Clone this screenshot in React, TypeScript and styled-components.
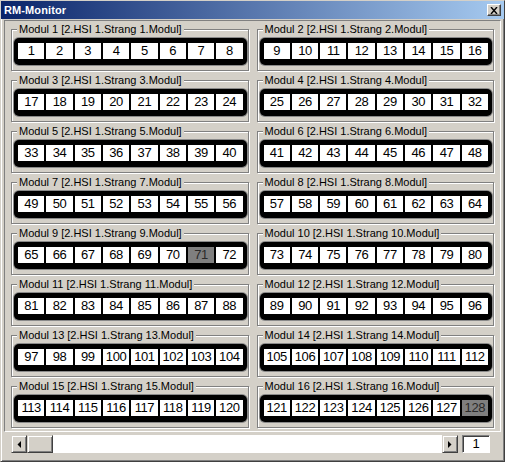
import React from "react";
import styled, { createGlobalStyle } from "styled-components";

const GlobalStyle = createGlobalStyle`
  html, body {
    margin: 0;
    padding: 0;
    background: #d4d0c8;
  }
  * {
    box-sizing: border-box;
  }
`;

const Window = styled.div`
  width: 505px;
  height: 462px;
  background: #d4d0c8;
  border: 1px solid;
  border-color: #d4d0c8 #404040 #404040 #d4d0c8;
  box-shadow: inset 1px 1px 0 #fff, inset -1px -1px 0 #808080;
  display: flex;
  flex-direction: column;
  font-family: "Liberation Sans", Arial, sans-serif;
  overflow: hidden;
`;

const TitleBar = styled.div`
  height: 18px;
  display: flex;
  align-items: center;
  justify-content: space-between;
  padding: 0 3px 0 3px;
  background: linear-gradient(to right, #0a246a, #a6caf0);
`;

const Title = styled.span`
  color: #fff;
  font-weight: bold;
  font-size: 11px;
  letter-spacing: 0.1px;
`;

const CloseButton = styled.div`
  width: 14px;
  height: 12px;
  background: #d4d0c8;
  border: 1px solid;
  border-color: #fff #404040 #404040 #fff;
  box-shadow: inset -1px -1px 0 #808080;
  display: flex;
  align-items: center;
  justify-content: center;
`;

const Body = styled.div`
  flex: 1;
  display: flex;
  flex-direction: column;
  padding: 1px 3px 3px 3px;
`;

const ModulePanel = styled.div`
  height: 412px;
  border: 1px solid;
  border-color: #808080 #fff #fff #808080;
  padding: 0 2px;
  display: grid;
  grid-template-columns: 1fr 1fr;
  grid-template-rows: repeat(8, 51px);
`;

const GroupBox = styled.fieldset`
  margin: 2px 4px 1px 4px;
  padding: 0 1px 5px 2px;
  border: 1px solid #808080;
  box-shadow: 1px 1px 0 #fff, inset 1px 1px 0 #fff;
  min-width: 0;
`;

const Legend = styled.legend`
  margin-left: 3px;
  padding: 0 2px;
  font-size: 11px;
  line-height: 13px;
  color: #000;
  background: #d4d0c8;
  white-space: nowrap;
`;

const Strip = styled.div`
  margin-top: 2px;
  height: 27px;
  background: #000;
  border-radius: 5px;
  padding: 5px 4px 6px 4px;
  box-shadow: 0 0 0 1px #8a8a8a;
  display: flex;
  gap: 2px;
`;

const Channel = styled.div<{ $active?: boolean }>`
  flex: 1;
  height: 16px;
  background: ${(p) => (p.$active ? "#7f7f7f" : "#fff")};
  color: ${(p) => (p.$active ? "#2a2a2a" : "#000")};
  font-size: 13px;
  line-height: 16px;
  letter-spacing: -0.4px;
  text-align: center;
`;

const BottomBar = styled.div`
  flex: 1;
  display: flex;
  align-items: flex-start;
  padding: 3px 11px 0 7px;
  gap: 4px;
`;

const ScrollBar = styled.div`
  flex: 1;
  height: 18px;
  display: flex;
  background: #fff;
`;

const RaisedButton = styled.div<{ $width: number }>`
  width: ${(p) => p.$width}px;
  height: 18px;
  background: #d4d0c8;
  border: 1px solid;
  border-color: #d4d0c8 #404040 #404040 #d4d0c8;
  box-shadow: inset 1px 1px 0 #fff, inset -1px -1px 0 #808080;
  display: flex;
  align-items: center;
  justify-content: center;
`;

const Track = styled.div`
  flex: 1;
  background: #fff;
`;

const PageBox = styled.div`
  width: 28px;
  height: 18px;
  background: #fff;
  border: 1px solid;
  border-color: #808080 #fff #fff #808080;
  box-shadow: inset 1px 1px 0 #404040;
  font-size: 13px;
  line-height: 16px;
  text-align: center;
  color: #000;
`;

const Arrow = ({ dir }: { dir: "left" | "right" }) => (
  <svg width="4" height="7" viewBox="0 0 4 7">
    {dir === "left" ? (
      <polygon points="4,0 4,7 0.5,3.5" fill="#000" />
    ) : (
      <polygon points="0,0 0,7 3.5,3.5" fill="#000" />
    )}
  </svg>
);

const activeChannels = [71, 128];

const modules = Array.from({ length: 16 }, (_, i) => i + 1);

const App = () => {
  return (
    <>
      <GlobalStyle />
      <Window>
        <TitleBar>
          <Title>RM-Monitor</Title>
          <CloseButton>
            <svg width="8" height="7" viewBox="0 0 8 7">
              <path d="M1 0 L7 7 M7 0 L1 7" stroke="#000" strokeWidth="1.4" />
            </svg>
          </CloseButton>
        </TitleBar>
        <Body>
          <ModulePanel>
            {modules.map((m) => (
              <GroupBox key={m}>
                <Legend>{`Modul ${m} [2.HSI 1.Strang ${m}.Modul]`}</Legend>
                <Strip>
                  {Array.from({ length: 8 }, (_, k) => {
                    const n = (m - 1) * 8 + k + 1;
                    return (
                      <Channel key={n} $active={activeChannels.includes(n)}>
                        {n}
                      </Channel>
                    );
                  })}
                </Strip>
              </GroupBox>
            ))}
          </ModulePanel>
          <BottomBar>
            <ScrollBar>
              <RaisedButton $width={16}>
                <Arrow dir="left" />
              </RaisedButton>
              <RaisedButton $width={26} />
              <Track />
              <RaisedButton $width={16}>
                <Arrow dir="right" />
              </RaisedButton>
            </ScrollBar>
            <PageBox>1</PageBox>
          </BottomBar>
        </Body>
      </Window>
    </>
  );
};

export default App;
